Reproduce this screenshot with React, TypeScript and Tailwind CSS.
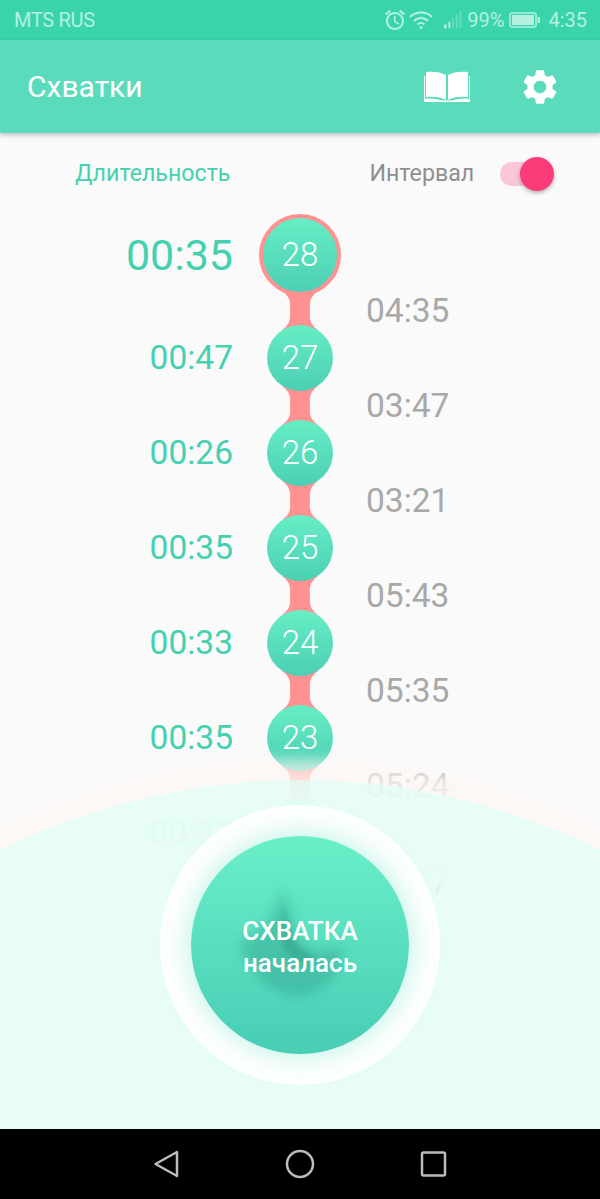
import { MdAccessAlarm, MdSettings } from 'react-icons/md'

const font = { fontFamily: 'Roboto, "Noto Sans", sans-serif' }

const durations = ['00:47', '00:26', '00:35', '00:33', '00:35', '00:32']
const intervals = ['04:35', '03:47', '03:21', '05:43', '05:35', '05:24', '04:27']
const numbers = [27, 26, 25, 24, 23, 22]

const Neck = () => (
  <svg width="44" height="29" viewBox="0 0 44 29" className="block overflow-visible">
    <path d="M4 -5 C14 2 12 9 12 14.5 C12 20 14 27 4 34 L40 34 C30 27 32 20 32 14.5 C32 9 30 2 40 -5 Z" fill="#ff9190" />
  </svg>
)

const StatusBar = () => (
  <div className="h-10 bg-[#3ad4ab] flex items-center pl-[14px] pr-[13px] text-[20px] text-[#b5f1e0]">
    <span className="tracking-[-0.3px]">MTS RUS</span>
    <div className="ml-auto flex items-center">
      <MdAccessAlarm size={24} className="mr-[1px]" />
      <svg width="26" height="22" viewBox="0 0 26 22" fill="none" stroke="currentColor" strokeWidth="2">
        <path d="M2 8 C8 2 18 2 24 8" />
        <path d="M6 12 C10 8 16 8 20 12" />
        <path d="M9.5 15.5 C11.5 13.5 14.5 13.5 16.5 15.5" />
        <circle cx="13" cy="18.5" r="1.5" fill="currentColor" stroke="none" />
      </svg>
      <svg width="22" height="22" viewBox="0 0 24 22" className="ml-[9px]" fill="currentColor">
        <rect x="1" y="16" width="3" height="4" />
        <rect x="6" y="13" width="2" height="7" />
        <rect x="10" y="9" width="2" height="11" opacity="0.35" />
        <rect x="14" y="5" width="2" height="15" opacity="0.35" />
        <rect x="18" y="1" width="2" height="19" opacity="0.35" />
      </svg>
      <span className="ml-[2px]">99%</span>
      <svg width="34" height="18" viewBox="0 0 32 18" className="ml-[4px]" fill="none">
        <rect x="1" y="2" width="26" height="14" rx="2" stroke="currentColor" strokeWidth="1.5" />
        <rect x="3" y="4" width="22" height="10" fill="currentColor" />
        <rect x="28.5" y="6" width="2.5" height="6" fill="currentColor" />
      </svg>
      <span className="ml-[6px]">4:35</span>
    </div>
  </div>
)

const AppBar = () => (
  <div className="relative z-10 h-[93px] bg-[#5adcbc] flex items-center pl-[27px] shadow-[0_2px_5px_rgba(0,0,0,0.25)]">
    <span className="text-[30px] text-white">Схватки</span>
    <svg width="48" height="32" viewBox="0 0 48 32" className="ml-auto" fill="white">
      <path d="M23 4 C18 1 10 0 3 1 L3 26 C10 25 18 26 23 29 Z" />
      <path d="M25 4 C30 1 38 0 45 1 L45 26 C38 25 30 26 25 29 Z" />
      <path d="M1 5 L1 30 L20 30 C15 28 8 27 2 28 L2 5 Z" />
      <path d="M47 5 L47 30 L28 30 C33 28 40 27 46 28 L46 5 Z" />
      <rect x="1" y="29.5" width="46" height="1.5" />
    </svg>
    <MdSettings size={42} color="white" className="ml-[48px] mr-[39px]" />
  </div>
)

const Dot = ({ value, big }: { value: number; big?: boolean }) => (
  <div
    className={
      big
        ? 'relative w-[82px] h-[82px] rounded-full border-[4px] border-[#ff9190] bg-gradient-to-b from-[#66eec5] to-[#4ccfb4] flex items-center justify-center text-white text-[33px] font-light'
        : 'relative w-[66px] h-[66px] rounded-full bg-gradient-to-b from-[#66eec5] to-[#4ccfb4] flex items-center justify-center text-white text-[33px] font-light'
    }
  >
    {value}
  </div>
)

const Timeline = () => (
  <div className="flex pt-[8px]">
    <div className="w-[233px] flex flex-col items-end gap-[29px] text-[#45d1af]">
      <div className="h-[82px] flex items-center text-[43px]">00:35</div>
      {durations.map((d, i) => (
        <div key={i} className="h-[66px] flex items-center text-[33.5px]">
          {d}
        </div>
      ))}
    </div>
    <div className="w-[134px] flex flex-col items-center">
      <Dot value={28} big />
      {numbers.map((n) => (
        <div key={n} className="flex flex-col items-center">
          <Neck />
          <Dot value={n} />
        </div>
      ))}
    </div>
    <div className="flex-1 flex flex-col -ml-px pt-[50px] text-[33.5px] text-[#a8a8a8]">
      {intervals.map((t, i) => (
        <div key={i} className="h-[95px] flex items-center">
          {t}
        </div>
      ))}
    </div>
  </div>
)

const StartButton = () => (
  <div className="w-[280px] h-[280px] rounded-full bg-white flex items-center justify-center">
    <div className="relative w-[218px] h-[218px] rounded-full bg-gradient-to-b from-[#69f0c8] to-[#48cdb6] shadow-[0_0_30px_rgba(90,225,190,0.45)] flex flex-col items-center justify-center">
      <svg width="218" height="218" viewBox="0 0 218 218" className="absolute inset-0">
        <defs>
          <filter id="soft" x="-30%" y="-30%" width="160%" height="160%">
            <feGaussianBlur stdDeviation="6" />
          </filter>
          <filter id="softer" x="-30%" y="-30%" width="160%" height="160%">
            <feGaussianBlur stdDeviation="2.5" />
          </filter>
        </defs>
        <path
          d="M90 54 C100 62 100 85 104 96 C108 106 120 114 132 116 C142 108 150 110 152 116 C150 140 128 158 109 161 C90 158 72 150 66 138 C58 128 50 118 49 107 C70 100 84 80 90 54 Z"
          fill="#2f9f8a"
          opacity="0.42"
          filter="url(#soft)"
        />
        <path d="M92 72 C98 82 98 100 106 108 C114 116 122 118 122 124 C108 130 94 118 92 110 Z" fill="#2a9582" opacity="0.4" filter="url(#softer)" />
      </svg>
      <div className="relative flex flex-col items-center pt-[3px] text-white text-[26px] font-medium leading-[32px]">
        <span>СХВАТКА</span>
        <span>началась</span>
      </div>
    </div>
  </div>
)

export default function App() {
  return (
    <div className="w-[600px] h-[1199px] flex flex-col overflow-hidden" style={font}>
      <StatusBar />
      <AppBar />
      <main className="relative flex-1 bg-[#fafafa] overflow-hidden">
        <div className="h-[65px] mt-[8px] flex items-center text-[23.2px]">
          <span className="ml-[75px] text-[#45d1af]">Длительность</span>
          <span className="ml-[139px] text-[#8f8f8f]">Интервал</span>
          <div className="relative ml-[26px] w-[46px] h-[24px] rounded-full bg-[#fbc6d8]">
            <div className="absolute right-[-8px] top-[-5px] w-[34px] h-[34px] rounded-full bg-[#fb3c79] shadow-[0_2px_4px_rgba(0,0,0,0.3)]" />
          </div>
        </div>
        <Timeline />

        {/* fade over the end of the list */}
        <div className="absolute left-0 right-0 top-[617px] h-[135px] bg-gradient-to-b from-[#fafafa]/0 via-[#fafafa]/65 via-[30%] to-[#fafafa]/90" />
        <div className="absolute left-1/2 -translate-x-1/2 top-[627px] w-[1400px] h-[1400px] rounded-full bg-[#fff5f2]/50 blur-[6px]" />
        <div className="absolute left-1/2 -translate-x-1/2 top-[647px] w-[1356px] h-[1356px] rounded-full bg-[#ddfff7]/70" />
        <div className="absolute left-[160px] top-[672px]">
          <StartButton />
        </div>
      </main>
      <nav className="h-[70px] bg-black flex items-center justify-center">
        <svg width="400" height="70" viewBox="0 0 400 70" fill="none" stroke="#bdbdbd" strokeWidth="2.5" strokeLinejoin="round">
          <path d="M55.5 35 L77 23 L77 47 Z" />
          <circle cx="200" cy="35" r="13" />
          <rect x="322" y="23.5" width="23" height="23" rx="1.5" />
        </svg>
      </nav>
    </div>
  )
}
